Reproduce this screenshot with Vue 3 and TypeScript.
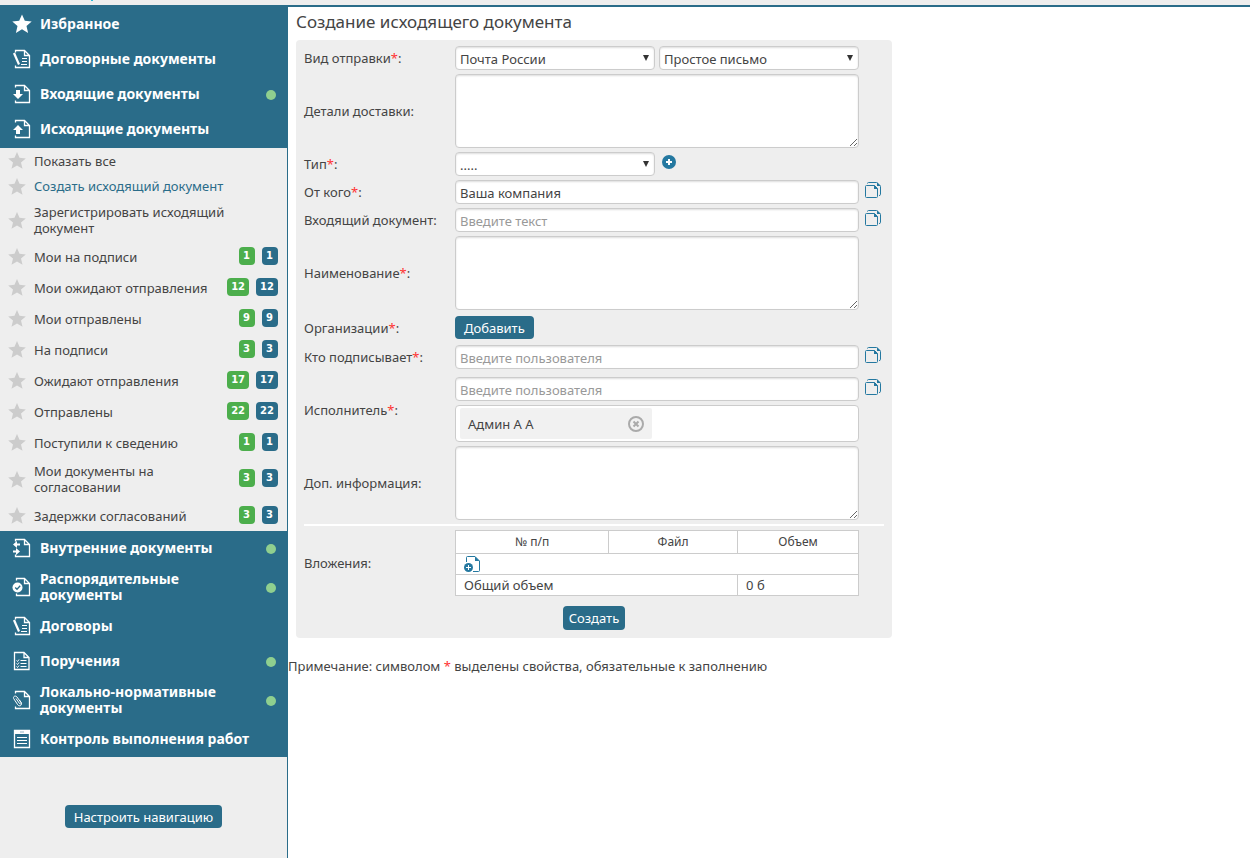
<script setup lang="ts">
interface NavItem {
  label: string
  icon: string
  dot?: boolean
}
interface SubItem {
  label: string
  count?: number
  tight?: boolean
  active?: boolean
}

const topNav: NavItem[] = [
  { label: 'Избранное', icon: 'star' },
  { label: 'Договорные документы', icon: 'pen' },
  { label: 'Входящие документы', icon: 'in', dot: true },
  { label: 'Исходящие документы', icon: 'out' },
]
const subNav: SubItem[] = [
  { label: 'Показать все', tight: true },
  { label: 'Создать исходящий документ', tight: true, active: true },
  { label: 'Зарегистрировать исходящий документ' },
  { label: 'Мои на подписи', count: 1 },
  { label: 'Мои ожидают отправления', count: 12 },
  { label: 'Мои отправлены', count: 9 },
  { label: 'На подписи', count: 3 },
  { label: 'Ожидают отправления', count: 17 },
  { label: 'Отправлены', count: 22 },
  { label: 'Поступили к сведению', count: 1 },
  { label: 'Мои документы на согласовании', count: 3 },
  { label: 'Задержки согласований', count: 3 },
]
const bottomNav: NavItem[] = [
  { label: 'Внутренние документы', icon: 'inner', dot: true },
  { label: 'Распорядительные документы', icon: 'check', dot: true },
  { label: 'Договоры', icon: 'pen' },
  { label: 'Поручения', icon: 'tasks', dot: true },
  { label: 'Локально-нормативные документы', icon: 'clip', dot: true },
  { label: 'Контроль выполнения работ', icon: 'board' },
]
const groups = [topNav, bottomNav]
</script>

<template>
  <div class="page">
    <header class="strip"><span class="mark"></span></header>
    <div class="body">
      <aside class="side">
        <template v-for="(group, g) in groups" :key="g">
          <nav class="group" :class="{ first: g === 0 }">
            <a v-for="item in group" :key="item.label" href="#" class="head">
              <svg class="head-icon" viewBox="0 0 20 20" aria-hidden="true">
                <path v-if="item.icon === 'star'" class="fill" d="M10 .5l2.8 6.2 6.9.7-5.2 4.6 1.6 6.9-6.1-3.6-6.1 3.6 1.600-6.900L.3 7.400l6.900-.7z" />
                <template v-else-if="item.icon === 'tasks'">
                  <path d="M2.500 1.500h9.500l5 5v12h-14.500zM12 1.500v5h5" />
                  <path class="thin" d="M8.500 9.500h6M8.500 12.500h6M8.500 15.500h6M4.500 9.500l1 1 1.500-2M4.500 12.500l1 1 1.500-2M4.500 15.500l1 1 1.500-2" />
                </template>
                <template v-else-if="item.icon === 'board'">
                  <path d="M2.500 1.500h15v17h-15z" />
                  <path class="fill" d="M2 1h16v4H2z" />
                  <path class="cut faint" d="M8 3h4" />
                  <path class="thin" d="M5 8.500h10M5 11.500h10M5 14.500h10" />
                </template>
                <template v-else>
                  <path v-if="item.icon === 'check'" d="M4.500 3.500v-2h8l5 5v12h-13v-2M12.500 1.500v5h5" />
                  <path v-else d="M3.500 3.500v-2h9l5 5v12h-14v-2M12.500 1.500v5h5" />
                  <path v-if="item.icon === 'in'" class="fill" d="M4 6h4v4h3L6 15 1 10h3z" />
                  <path v-if="item.icon === 'out'" class="fill" d="M4 15h4v-4h3L6 6l-5 5h3z" />
                  <path v-if="item.icon === 'inner'" class="fill" d="M8 5.500H5V3L1 6.500 5 10V7.500h3zM1 12.500h3V10l4 3.500L4 17v-2.500H1z" />
                  <template v-if="item.icon === 'check'">
                    <circle class="fill" cx="5.500" cy="10.500" r="5" />
                    <path class="cut" d="M3.200 10.500l1.800 1.800 3.200-3.500" />
                  </template>
                  <template v-if="item.icon === 'pen'">
                    <path class="pen" d="M2 4l5 11.500" />
                    <path class="thin" d="M10 9.500h5M10 12.500h5M9 15.500h6" />
                  </template>
                  <path v-if="item.icon === 'clip'" class="thin" d="M4 8.500l3.500 5c.8 1.200 2.300.3 1.500-1L5 7C3.500 5 .5 6.500 1.800 8.800l4 6c1.500 2.200 4.700.5 3.500-2L7.500 10" />
                </template>
              </svg>
              <span class="head-text">{{ item.label }}</span>
              <span v-if="item.dot" class="dot"></span>
            </a>
          </nav>
          <ul v-if="g === 0" class="subs">
            <li v-for="sub in subNav" :key="sub.label" class="sub" :class="{ tight: sub.tight }">
              <svg class="sub-star" viewBox="0 0 18 17" aria-hidden="true">
                <path d="M9 0l2.500 5.800 6.300.6-4.800 4.200 1.500 6.200L9 13.500l-5.500 3.300L5 10.600.2 6.400l6.300-.6z" />
              </svg>
              <a href="#" class="sub-text" :class="{ active: sub.active }">{{ sub.label }}</a>
              <template v-if="sub.count">
                <span class="badge green">{{ sub.count }}</span>
                <span class="badge">{{ sub.count }}</span>
              </template>
            </li>
          </ul>
        </template>
        <button type="button" class="btn setup">Настроить навигацию</button>
      </aside>

      <main class="main">
        <h1>Создание исходящего документа</h1>
        <form class="card" @submit.prevent>
          <div class="row">
            <label for="kind">Вид отправки<i>*</i>:</label>
            <div class="pair">
              <span class="select">
                <select id="kind"><option>Почта России</option></select>
                <svg viewBox="0 0 7 7" aria-hidden="true"><path d="M0 0h7L3.500 7z" /></svg>
              </span>
              <span class="select">
                <select aria-label="Способ"><option>Простое письмо</option></select>
                <svg viewBox="0 0 7 7" aria-hidden="true"><path d="M0 0h7L3.500 7z" /></svg>
              </span>
            </div>
          </div>
          <div class="row">
            <label for="details">Детали доставки:</label>
            <textarea id="details"></textarea>
          </div>
          <div class="row">
            <label for="type">Тип<i>*</i>:</label>
            <div class="pair">
              <span class="select">
                <select id="type"><option>.....</option></select>
                <svg viewBox="0 0 7 7" aria-hidden="true"><path d="M0 0h7L3.500 7z" /></svg>
              </span>
              <button type="button" class="icon-btn add" aria-label="Добавить тип">
                <svg viewBox="0 0 14 14"><circle cx="7" cy="7" r="7" /><path d="M7 4v6M4 7h6" /></svg>
              </button>
            </div>
          </div>
          <div class="row">
            <label for="from">От кого<i>*</i>:</label>
            <input id="from" type="text" value="Ваша компания" />
            <button type="button" class="icon-btn copy" aria-label="Выбрать">
              <svg viewBox="0 0 16 16"><path d="M2.500 1.500q0-1 1-1h8l4 4v8q0 1-1.500 1" /><path class="sheet" d="M.5 4.500q0-1 1-1h8l3 3v8q0 1-1 1h-10q-1 0-1-1z" /><path class="fold" d="M9 3l4 4H9zM12 0l4 4h-4z" /></svg>
            </button>
          </div>
          <div class="row">
            <label for="incoming">Входящий документ:</label>
            <input id="incoming" type="text" placeholder="Введите текст" />
            <button type="button" class="icon-btn copy" aria-label="Выбрать">
              <svg viewBox="0 0 16 16"><path d="M2.500 1.500q0-1 1-1h8l4 4v8q0 1-1.500 1" /><path class="sheet" d="M.5 4.500q0-1 1-1h8l3 3v8q0 1-1 1h-10q-1 0-1-1z" /><path class="fold" d="M9 3l4 4H9zM12 0l4 4h-4z" /></svg>
            </button>
          </div>
          <div class="row">
            <label for="title">Наименование<i>*</i>:</label>
            <textarea id="title"></textarea>
          </div>
          <div class="row org">
            <label for="org">Организации<i>*</i>:</label>
            <div><button id="org" type="button" class="btn">Добавить</button></div>
          </div>
          <div class="row">
            <label for="signer">Кто подписывает<i>*</i>:</label>
            <input id="signer" type="text" placeholder="Введите пользователя" />
            <button type="button" class="icon-btn copy" aria-label="Выбрать">
              <svg viewBox="0 0 16 16"><path d="M2.500 1.500q0-1 1-1h8l4 4v8q0 1-1.500 1" /><path class="sheet" d="M.5 4.500q0-1 1-1h8l3 3v8q0 1-1 1h-10q-1 0-1-1z" /><path class="fold" d="M9 3l4 4H9zM12 0l4 4h-4z" /></svg>
            </button>
          </div>
          <div class="row people">
            <label for="executor">Исполнитель<i>*</i>:</label>
            <div class="stack">
              <input id="executor" type="text" placeholder="Введите пользователя" />
              <div class="chips">
                <span class="chip">
                  Админ А А
                  <button type="button" aria-label="Удалить">
                    <svg viewBox="0 0 16 16"><circle cx="8" cy="8" r="7" /><path d="M5.500 5.500l5 5M10.500 5.500l-5 5" /></svg>
                  </button>
                </span>
              </div>
            </div>
            <button type="button" class="icon-btn copy" aria-label="Выбрать">
              <svg viewBox="0 0 16 16"><path d="M2.500 1.500q0-1 1-1h8l4 4v8q0 1-1.500 1" /><path class="sheet" d="M.5 4.500q0-1 1-1h8l3 3v8q0 1-1 1h-10q-1 0-1-1z" /><path class="fold" d="M9 3l4 4H9zM12 0l4 4h-4z" /></svg>
            </button>
          </div>
          <div class="row">
            <label for="info">Доп. информация:</label>
            <textarea id="info"></textarea>
          </div>
          <hr />
          <div class="row">
            <span id="files">Вложения:</span>
            <table aria-labelledby="files">
              <colgroup><col class="c1" /><col class="c2" /><col class="c3" /></colgroup>
              <thead>
                <tr><th>№ п/п</th><th>Файл</th><th>Объем</th></tr>
              </thead>
              <tbody>
                <tr>
                  <td colspan="3">
                    <button type="button" class="icon-btn file" aria-label="Добавить файл">
                      <svg viewBox="0 0 16 16"><path d="M2.500 6V1.500q0-1 1-1H11l4.500 4.500v9.500q0 1-1 1H9" /><path class="fold" d="M11 .5l4.500 4.500H11z" /><circle cx="4.500" cy="11.500" r="4.500" /><path class="plus" d="M4.500 9v5M2 11.500h5" /></svg>
                    </button>
                  </td>
                </tr>
                <tr><td colspan="2">Общий объем</td><td>0 б</td></tr>
              </tbody>
            </table>
          </div>
          <button type="submit" class="btn create">Создать</button>
        </form>
        <p class="note">Примечание: символом <i>*</i> выделены свойства, обязательные к заполнению</p>
      </main>
    </div>
  </div>
</template>

<style>
body {
  margin: 0;
}
</style>

<style scoped>
.page {
  display: flex;
  flex-direction: column;
  min-height: 100vh;
  background: #fff;
  color: #444;
  font: 13px/16px "Noto Sans", "Open Sans", sans-serif;
}
.page * {
  box-sizing: border-box;
}
.strip {
  display: flex;
  height: 7px;
  padding-left: 91px;
  background: #eee;
  border-bottom: 2px solid #2a6c89;
}
.mark {
  width: 2px;
  height: 1px;
  background: #2bb8d8;
}
.body {
  display: flex;
  flex: 1;
}
.side {
  flex: 0 0 288px;
  display: flex;
  flex-direction: column;
  background: #eee;
  border-right: 1px solid #2a6c89;
}
.group {
  background: #2a6c89;
}
.group.first {
  padding-bottom: 1px;
}
.head {
  display: flex;
  align-items: center;
  min-height: 35px;
  padding: 5px 11px 6px 12px;
  color: #fff;
  font-size: 14px;
  font-weight: 700;
  text-decoration: none;
}
.head-icon {
  flex: none;
  width: 20px;
  height: 20px;
  margin-right: 8px;
  fill: none;
  stroke: #fff;
  stroke-width: 1.3;
}
.head-icon .fill {
  fill: #fff;
  stroke: none;
}
.head-icon .cut {
  stroke: #2a6c89;
}
.head-icon .faint {
  opacity: 0.4;
}
.head-icon .thin {
  stroke-width: 1;
}
.head-icon .pen {
  stroke-width: 2.2;
}
.head-text {
  flex: 1;
  max-width: 220px;
}
.dot {
  width: 10px;
  height: 10px;
  margin-top: 2px;
  margin-left: auto;
  border-radius: 50%;
  background: #8fcf8f;
}
.subs {
  margin: 0;
  padding: 0;
  list-style: none;
}
.sub {
  display: flex;
  align-items: center;
  min-height: 31px;
  padding: 5px 9px 5px 8px;
}
.sub.tight {
  min-height: 26px;
  padding-top: 4px;
  padding-bottom: 4px;
}
.sub.tight:first-child {
  min-height: 25px;
}
.sub-star {
  flex: none;
  width: 18px;
  height: 17px;
  margin-right: 8px;
  fill: #ccc;
}
.sub-text {
  flex: 1;
  max-width: 200px;
  margin-right: auto;
  color: #444;
  text-decoration: none;
}
.sub-text.active {
  color: #2a6c89;
}
.badge {
  min-width: 16px;
  margin-bottom: 2px;
  margin-left: 7px;
  padding: 1px 4px;
  border-radius: 4px;
  background: #2a6c89;
  color: #fff;
  font: 700 10px/16px "DejaVu Sans", sans-serif;
}
.badge.green {
  background: #4cae4c;
}
.btn {
  height: 23px;
  padding: 0 9px;
  border: 0;
  border-radius: 4px;
  background: #2a6c89;
  color: #fff;
  font: inherit;
}
.setup {
  align-self: center;
  margin-top: 48px;
}
.main {
  flex: 1;
  min-width: 0;
}
h1 {
  margin: 0 8px;
  font-size: 17px;
  font-weight: 400;
  line-height: 30px;
  padding-bottom: 3px;
}
.card {
  display: flex;
  flex-direction: column;
  gap: 4px;
  max-width: 596px;
  margin: 0 8px;
  padding: 6px 8px 8px;
  border-radius: 4px;
  background: #eee;
}
.row {
  display: grid;
  grid-template-columns: 151px 1fr 25px;
  align-items: center;
}
i {
  color: #f33;
  font-style: normal;
}
.org {
  padding: 2px 0;
}
.people {
  padding-top: 4px;
}
input,
textarea,
select {
  display: block;
  width: 100%;
  height: 24px;
  margin: 0;
  padding: 1px 4px 0;
  border: 1px solid #ccc;
  border-radius: 4px;
  outline: 0;
  background: #fff;
  box-shadow: inset 0 1px 2px #ddd;
  color: #444;
  font: inherit;
  appearance: none;
}
textarea {
  height: 74px;
}
input::placeholder {
  color: #999;
}
.pair {
  display: grid;
  grid-template-columns: 1fr 1fr;
  gap: 4px;
}
.select {
  position: relative;
}
.select svg {
  position: absolute;
  top: 9px;
  right: 6px;
  width: 6px;
  height: 6px;
  fill: #333;
}
.icon-btn {
  display: block;
  padding: 0;
  border: 0;
  background: none;
}
.icon-btn svg {
  display: block;
  width: 16px;
  height: 16px;
  fill: none;
  stroke: #2478a0;
}
.icon-btn.add {
  align-self: start;
  width: 14px;
  margin-left: 3px;
  padding-top: 3px;
}
.icon-btn.add svg {
  width: 14px;
  height: 14px;
}
.icon-btn circle,
.icon-btn .fold {
  fill: #2478a0;
  stroke: none;
}
.icon-btn .sheet {
  fill: #eee;
}
.icon-btn.add path {
  stroke: #fff;
  stroke-width: 2;
}
.icon-btn .plus {
  stroke: #fff;
}
.icon-btn.copy {
  align-self: start;
  width: 16px;
  margin-left: 6px;
  padding-top: 2px;
}
.stack {
  display: grid;
  gap: 4px;
}
.chips {
  padding: 2px 4px;
  border: 1px solid #ccc;
  border-radius: 4px;
  background: #fff;
}
.chip {
  display: flex;
  align-items: center;
  justify-content: space-between;
  width: 192px;
  height: 31px;
  padding: 0 8px;
  border-radius: 2px;
  background: #f1f1f1;
}
.chip button {
  padding: 0;
  border: 0;
  background: none;
}
.chip svg {
  display: block;
  width: 16px;
  height: 16px;
  fill: none;
  stroke: #aaa;
  stroke-width: 2;
}
hr {
  width: 100%;
  height: 2px;
  margin: 0;
  border: 0;
  background: #fff;
}
table {
  width: 100%;
  border-collapse: collapse;
  table-layout: fixed;
  background: #fff;
}
.c1 {
  width: 38%;
}
.c2 {
  width: 32%;
}
.c3 {
  width: 30%;
}
th,
td {
  height: 21px;
  padding: 0 8px;
  border: 1px solid #ccc;
  text-align: left;
}
th {
  height: 23px;
  font-size: 12px;
  font-weight: 400;
  text-align: center;
}
.create {
  align-self: center;
  height: 24px;
  margin-top: 6px;
  padding: 0 6px;
}
.note {
  margin: 20px 0;
}
</style>
